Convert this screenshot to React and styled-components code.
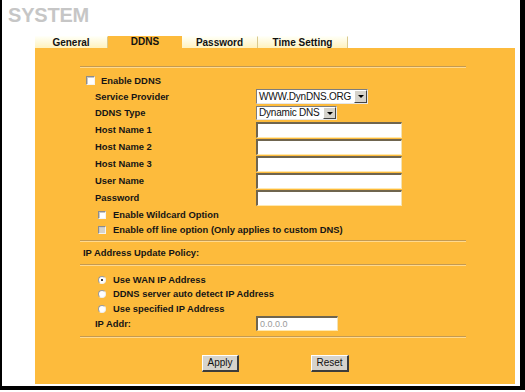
import React from "react";
import styled, { createGlobalStyle } from "styled-components";

const Global = createGlobalStyle`
  html, body { margin: 0; padding: 0; background: #fff; }
  body { font-family: "Liberation Sans", Arial, sans-serif; }
`;

const FONT = `"Liberation Sans", Arial, sans-serif`;
const ORANGE = "#fdbb3c";

const Frame = styled.div`
  width: 525px;
  height: 390px;
  box-sizing: border-box;
  border-left: 2px solid #000;
  border-right: 5px solid #000;
  border-bottom: 4px solid #000;
  background: #fff;
  display: flex;
  flex-direction: column;
`;

const Title = styled.h1`
  margin: 5px 0 0 6px;
  font: bold 20px/20px ${FONT};
  color: #c6c6c6;
  letter-spacing: -0.2px;
`;

const Tabs = styled.div`
  display: flex;
  margin: 11px 0 0 33px;
  height: 12px;
`;

const Tab = styled.div`
  width: ${(p) => p.$w}px;
  height: 12px;
  box-sizing: border-box;
  display: flex;
  align-items: center;
  justify-content: center;
  font: bold 10px/1 ${FONT};
  color: #111;
  background: ${(p) => (p.$active ? ORANGE : "linear-gradient(#fffff4, #fff2be)")};
  border-right: ${(p) => (p.$active ? "none" : "1px solid #d9c98e")};
  border-top: ${(p) => (p.$active ? "none" : "1px solid #fffff8")};
`;

const Panel = styled.div`
  margin-left: 33px;
  width: 480px;
  height: 336px;
  background: ${ORANGE};
  display: flex;
  flex-direction: column;
`;

const Rule = styled.div`
  margin: ${(p) => p.$mt}px 0 0 45px;
  width: 386px;
  height: 0;
  border-top: 1px solid #c39a52;
  border-bottom: 1px solid #ffd98e;
`;

const Row = styled.div`
  height: ${(p) => p.$h}px;
  margin-top: ${(p) => p.$mt || 0}px;
  padding-left: ${(p) => p.$indent}px;
  display: flex;
  align-items: center;
  font: bold 9.4px/1 ${FONT};
  color: #151515;
  white-space: nowrap;
`;

const Label = styled.span`
  width: 161px;
  flex: none;
`;

const Check = styled.span`
  flex: none;
  width: ${(p) => p.$size}px;
  height: ${(p) => p.$size}px;
  box-sizing: border-box;
  margin-right: ${(p) => p.$gap}px;
  background: ${(p) => (p.$disabled ? "#d6d3cc" : "#fff")};
  border-top: 1px solid #8c8c8c;
  border-left: 1px solid #8c8c8c;
  border-right: 1px solid #f4f4f4;
  border-bottom: 1px solid #f4f4f4;
  box-shadow: inset 1px 1px 0 #c8c8c8;
`;

const Radio = styled.span`
  flex: none;
  width: 8px;
  height: 8px;
  box-sizing: border-box;
  margin-right: 7px;
  border-radius: 50%;
  background: #fff;
  border: 1px solid #9a9a9a;
  border-right-color: #eee;
  border-bottom-color: #eee;
  display: flex;
  align-items: center;
  justify-content: center;
  &::after {
    content: "";
    width: 2px;
    height: 2px;
    border-radius: 50%;
    background: ${(p) => (p.$checked ? "#000" : "transparent")};
  }
`;

const Select = styled.div`
  width: ${(p) => p.$w}px;
  height: ${(p) => p.$hgt}px;
  box-sizing: border-box;
  display: flex;
  align-items: stretch;
  background: #fff;
  border-top: 1px solid #7d7d7d;
  border-left: 1px solid #7d7d7d;
  border-right: 1px solid #e6e6e6;
  border-bottom: 1px solid #e6e6e6;
  font: normal 10px/1 ${FONT};
  color: #111;
`;

const SelectText = styled.span`
  flex: 1;
  display: flex;
  align-items: center;
  padding-left: 2px;
  letter-spacing: -0.2px;
`;

const SelectBtn = styled.span`
  width: 13px;
  flex: none;
  box-sizing: border-box;
  background: #d6d3cc;
  border-top: 1px solid #fff;
  border-left: 1px solid #fff;
  border-right: 1px solid #444;
  border-bottom: 1px solid #444;
  display: flex;
  align-items: center;
  justify-content: center;
  &::after {
    content: "";
    border-left: 3px solid transparent;
    border-right: 3px solid transparent;
    border-top: 3px solid #000;
  }
`;

const TextInput = styled.input`
  width: ${(p) => p.$w}px;
  height: ${(p) => p.$hgt}px;
  box-sizing: border-box;
  margin: 0;
  padding: 0 2px;
  background: #fff;
  border-top: 2px solid #6f654f;
  border-left: 2px solid #6f654f;
  border-right: 1px solid #f3e2b4;
  border-bottom: 1px solid #ffe9b0;
  font: normal 9px/1 ${FONT};
  color: #9a9a9a;
  outline: none;
`;

const ButtonRow = styled.div`
  margin-top: 17px;
  height: 17px;
  padding-left: 167px;
  display: flex;
  gap: 72px;
`;

const Button = styled.button`
  width: ${(p) => p.$w}px;
  height: 17px;
  box-sizing: border-box;
  margin: 0;
  padding: 0;
  background: #d6d3cc;
  border-top: 1px solid #fff;
  border-left: 1px solid #fff;
  border-right: 2px solid #3c3c3c;
  border-bottom: 2px solid #3c3c3c;
  font: normal 10px/1 ${FONT};
  color: #111;
`;

const fieldRows = [
  { label: "Host Name 1" },
  { label: "Host Name 2" },
  { label: "Host Name 3" },
  { label: "User Name" },
  { label: "Password" },
];

export default function App() {
  return (
    <>
      <Global />
      <Frame>
        <Title>SYSTEM</Title>
        <Tabs>
          <Tab $w={73}>General</Tab>
          <Tab $w={74} $active>DDNS</Tab>
          <Tab $w={76}>Password</Tab>
          <Tab $w={90}>Time Setting</Tab>
        </Tabs>
        <Panel>
          <Rule $mt={18} />
          <Row $h={15} $mt={5} $indent={51}>
            <Check $size={9} $gap={6} />
            Enable DDNS
          </Row>
          <Row $h={17} $indent={60}>
            <Label>Service Provider</Label>
            <Select $w={112} $hgt={15}>
              <SelectText>WWW.DynDNS.ORG</SelectText>
              <SelectBtn />
            </Select>
          </Row>
          <Row $h={16} $indent={60}>
            <Label>DDNS Type</Label>
            <Select $w={81} $hgt={14}>
              <SelectText>Dynamic DNS</SelectText>
              <SelectBtn />
            </Select>
          </Row>
          {fieldRows.map((r) => (
            <Row key={r.label} $h={17} $indent={60}>
              <Label>{r.label}</Label>
              <TextInput $w={146} $hgt={16} readOnly />
            </Row>
          ))}
          <Row $h={15} $mt={1} $indent={63}>
            <Check $size={8} $gap={7} />
            Enable Wildcard Option
          </Row>
          <Row $h={15} $indent={63}>
            <Check $size={8} $gap={7} $disabled />
            Enable off line option (Only applies to custom DNS)
          </Row>
          <Rule $mt={3} />
          <Row $h={16} $mt={3} $indent={48}>
            IP Address Update Policy:
          </Row>
          <Rule $mt={3} />
          <Row $h={15} $mt={6} $indent={63}>
            <Radio $checked />
            Use WAN IP Address
          </Row>
          <Row $h={14} $indent={63}>
            <Radio />
            DDNS server auto detect IP Address
          </Row>
          <Row $h={15} $indent={63}>
            <Radio />
            Use specified IP Address
          </Row>
          <Row $h={15} $indent={60}>
            <Label>IP Addr:</Label>
            <TextInput $w={82} $hgt={15} defaultValue="0.0.0.0" readOnly />
          </Row>
          <Rule $mt={5} />
          <ButtonRow>
            <Button $w={37}>Apply</Button>
            <Button $w={38}>Reset</Button>
          </ButtonRow>
        </Panel>
      </Frame>
    </>
  );
}
